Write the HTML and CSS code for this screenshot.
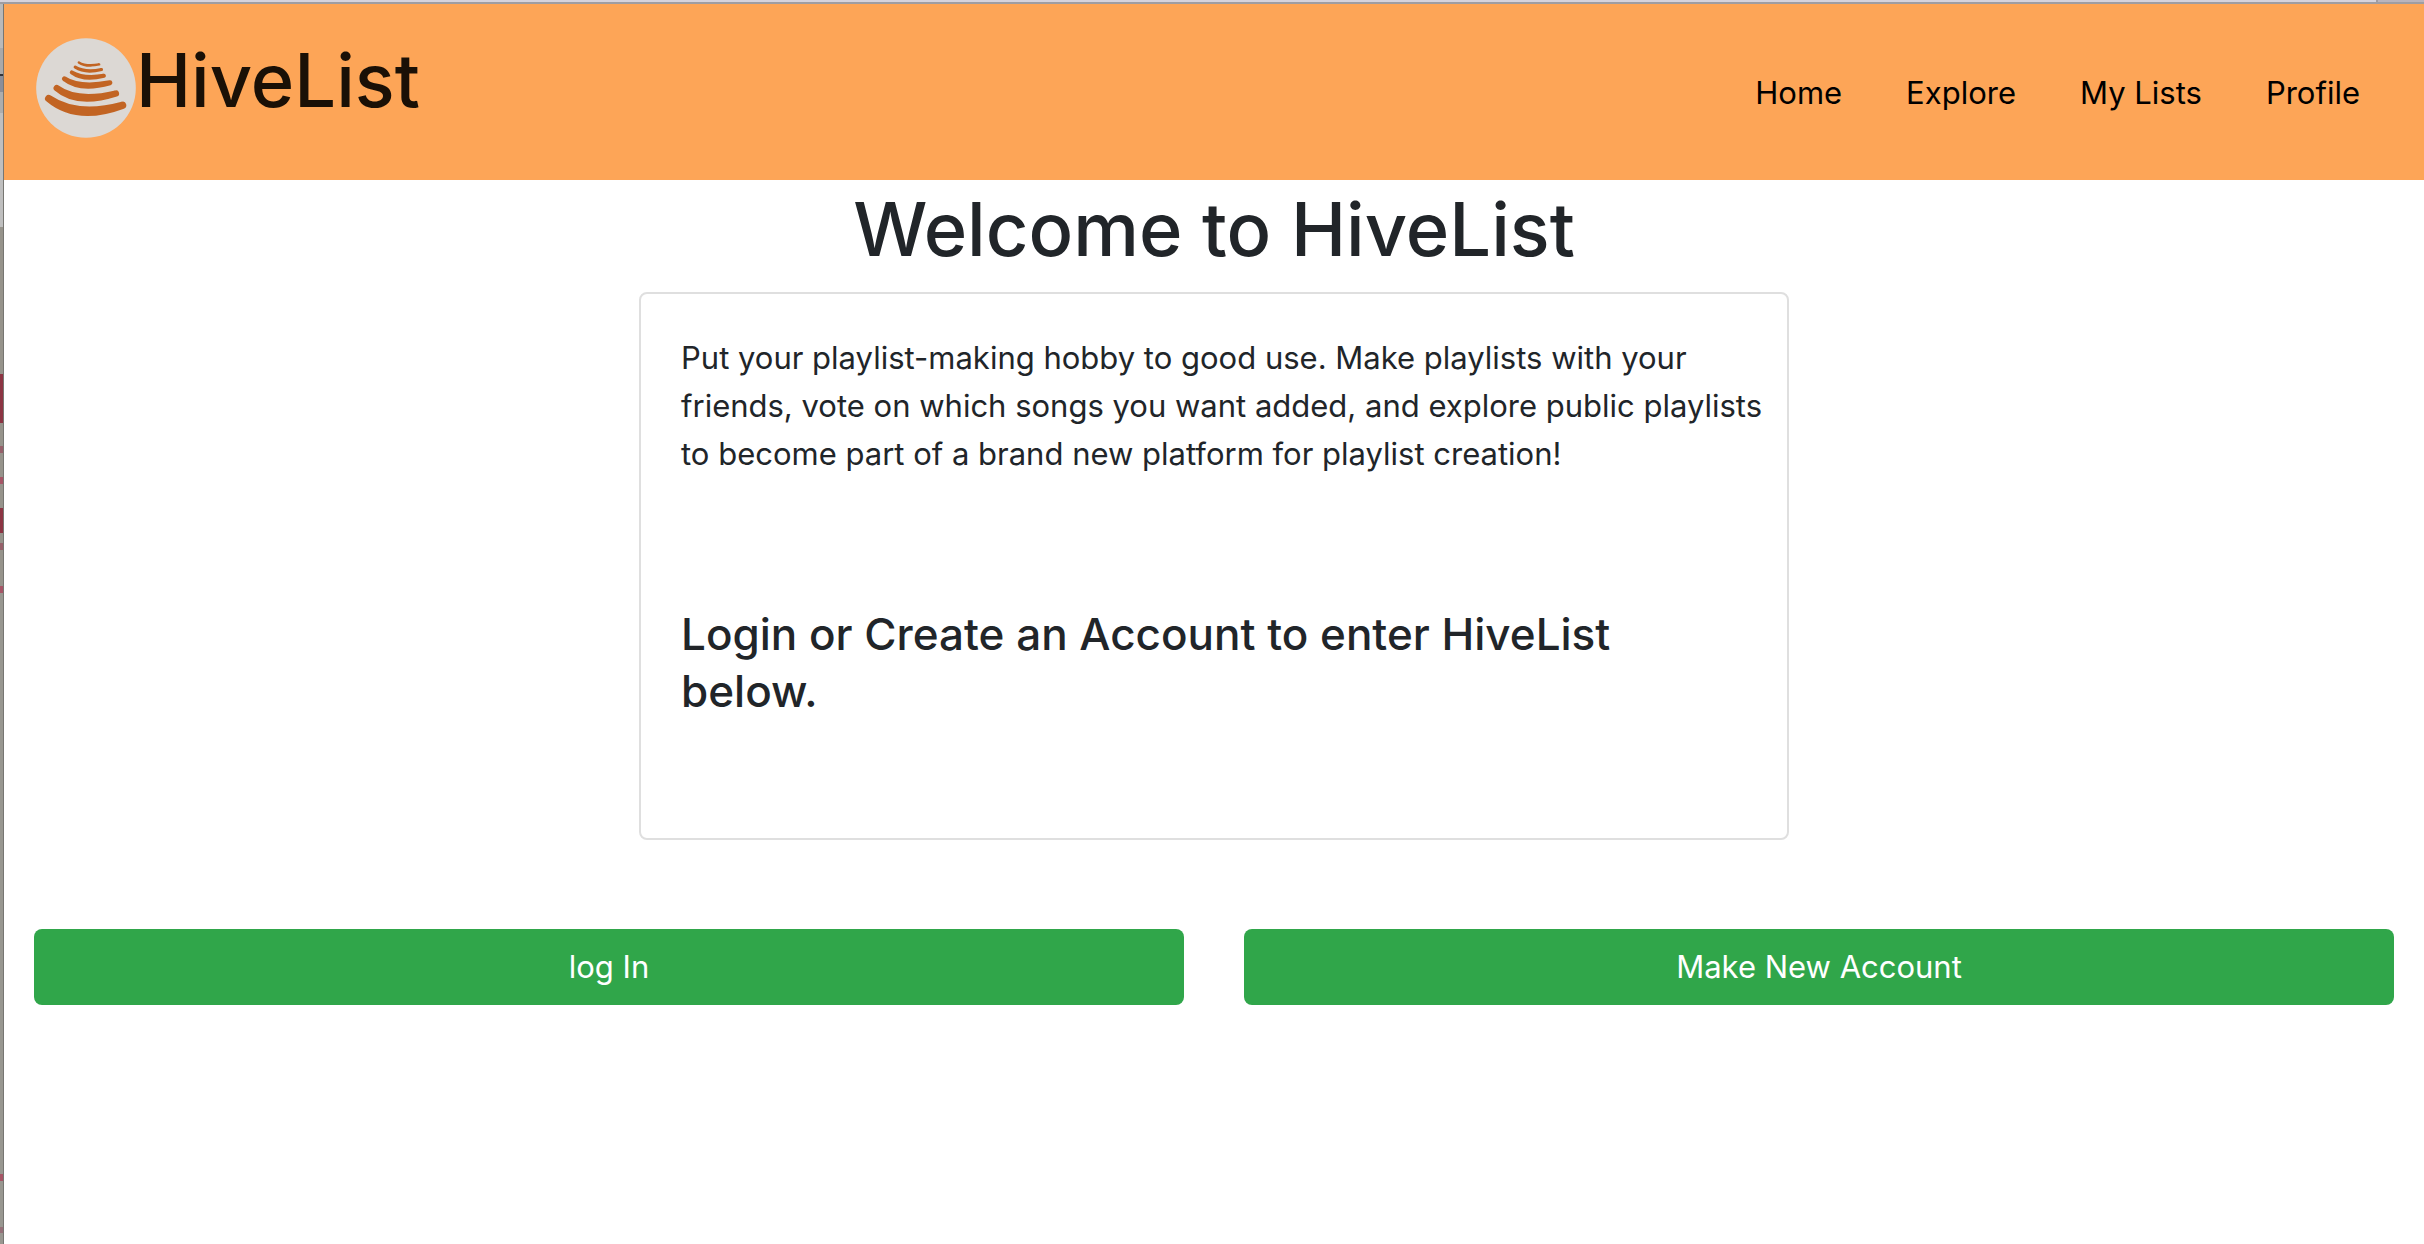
FILE: index.html
```html
<!DOCTYPE html>
<html lang="en">
<head>
<meta charset="utf-8">
<title>HiveList</title>
<link rel="stylesheet" href="styles.css">
</head>
<body>
<div class="top-edge"><span class="top-edge-end"></span></div>
<div class="window">
  <div class="side-edge"></div>
  <div class="page">
    <header class="navbar">
      <a class="brand" href="#">
        <svg class="logo" viewBox="18 24 299 299" aria-hidden="true">
          <circle cx="167.500" cy="173.500" r="149" fill="#dcd8d4"/>
          <g transform="translate(30 78)" fill="#c26423" stroke="#c26423" stroke-linejoin="round" stroke-linecap="round">
            <path stroke-width="7" d="M116 19Q138 32 177 25Q138 34 116 19z"/>
            <path stroke-width="9" d="M105 33Q135 50 184 40Q135 53 105 33z"/>
            <path stroke-width="12" d="M95 49Q130 69 191 59Q130 75 95 49z"/>
            <path stroke-width="15" d="M73 68Q118 97 209 80Q120 105 73 68z"/>
            <path stroke-width="19" d="M50 96Q110 140 227 112Q110 149 50 96z"/>
            <path stroke-width="22" d="M26 127Q110 184 247 147Q110 198 26 127z"/>
          </g>
        </svg>
        <span class="brand-name">HiveList</span>
      </a>
      <nav class="links">
        <a href="#">Home</a>
        <a href="#">Explore</a>
        <a href="#">My Lists</a>
        <a href="#">Profile</a>
      </nav>
    </header>
    <main class="content">
      <h1 class="title">Welcome to HiveList</h1>
      <section class="card">
        <p class="lead">Put your playlist-making hobby to good use. Make playlists with your friends, vote on which songs you want added, and explore public playlists to become part of a brand new platform for playlist creation!</p>
        <h2 class="prompt">Login or Create an Account to enter HiveList below.</h2>
      </section>
      <div class="actions">
        <button class="btn" type="button">log In</button>
        <button class="btn" type="button">Make New Account</button>
      </div>
    </main>
  </div>
</div>
</body>
</html>
```
FILE: styles.css
```css
* { box-sizing: border-box; }

body {
  margin: 0;
  min-height: 100vh;
  display: flex;
  flex-direction: column;
  background: #fff;
  color: #212529;
  font-family: Inter, "Liberation Sans", sans-serif;
  font-size: 31px;
  line-height: 48px;
}

.top-edge {
  height: 4px;
  display: flex;
  justify-content: flex-end;
  background: #d6d3dc;
  border-bottom: 2px solid #9f9da2;
}
.top-edge-end {
  width: 48px;
  background: #b9b4bd;
  border-left: 2px solid #9f9da2;
}

.window { flex: 1; display: flex; }

.side-edge {
  width: 4px;
  border-right: 1px solid #777672;
  background: linear-gradient(
    #b9b9b9 0 44px, #a9a9a9 44px 70px, #33343a 70px 72px, #8b8e99 72px 88px,
    #adadad 88px 109px, #bfbfbf 109px 223px, #96938b 223px 370px,
    #8c3443 370px 419px, #96938b 419px 442px, #96606a 442px 449px,
    #96938b 449px 473px, #a65566 473px 480px, #96938b 480px 504px,
    #8c3443 504px 529px, #96938b 529px 539px, #96606a 539px 546px,
    #96938b 546px 582px, #a65566 582px 589px, #989790 589px 1170px,
    #a65566 1170px 1177px, #989790 1177px 1223px, #957078 1223px 1229px,
    #989790 1229px);
}

.page { flex: 1; min-width: 0; }

.navbar {
  min-height: 176px;
  padding: 32px;
  display: flex;
  justify-content: space-between;
  align-items: flex-start;
  background: #fda557;
}

.brand {
  display: flex;
  color: #1a1006;
  text-decoration: none;
}
.logo { width: 100px; height: 100px; margin-top: 2px; }
.brand-name { font-size: 74px; font-weight: 500; line-height: 88px; }

.links { display: flex; padding-top: 33px; }
.links a {
  padding: 0 32px;
  line-height: 48px;
  color: #000;
  text-decoration: none;
}

.title {
  margin: 0 0 14px;
  font-size: 74px;
  font-weight: 500;
  line-height: 98px;
  text-align: center;
}

.content { padding: 0 30px; }

.card {
  width: calc(50% - 30px);
  min-height: 548px;
  margin: 0 auto 89px;
  padding: 40px 20px 40px 40px;
  border: 2px solid #dfdfdf;
  border-radius: 8px;
}
.lead { margin: 0 0 128px; }
.prompt {
  margin: 0;
  padding-right: 20px;
  font-size: 44px;
  font-weight: 500;
  line-height: 57px;
}

.actions { display: flex; gap: 60px; }
.btn {
  flex: 1;
  padding: 14px 24px;
  border: 0;
  border-radius: 8px;
  background: #30a64a;
  color: #fff;
  font: inherit;
}
```
